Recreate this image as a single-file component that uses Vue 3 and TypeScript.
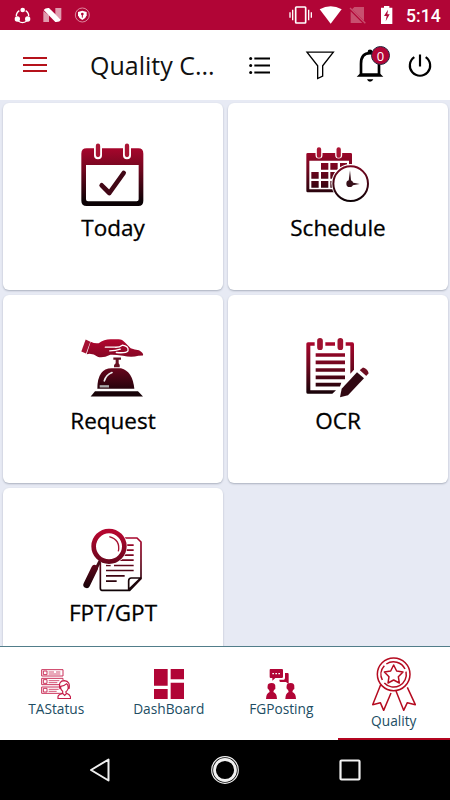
<script setup lang="ts">
interface Tile {
  id: string
  label: string
  box: string
}

interface Tab {
  id: string
  label: string
  active?: boolean
}

const tiles: Tile[] = [
  { id: 'today', label: 'Today', box: '60 30 195 210' },
  { id: 'schedule', label: 'Schedule', box: '75 30 195 210' },
  { id: 'request', label: 'Request', box: '60 22.5 195 210' },
  { id: 'ocr', label: 'OCR', box: '75 22.5 195 210' },
  { id: 'fpt', label: 'FPT/GPT', box: '60 15 195 210' },
]

const tabs: Tab[] = [
  { id: 'status', label: 'TAStatus' },
  { id: 'dashboard', label: 'DashBoard' },
  { id: 'posting', label: 'FGPosting' },
  { id: 'quality', label: 'Quality', active: true },
]
</script>

<template>
  <div class="screen">
    <div class="statusbar">
      <svg class="status-left" viewBox="0 0 300 90">
        <g fill="none" stroke="#fff" stroke-width="4">
          <path d="M58 32A19 19 0 0 0 49 49M55 63A20 20 0 0 0 80 63M86 49A19 19 0 0 0 77 32" />
        </g>
        <g fill="#fff">
          <circle cx="68" cy="30" r="7" /><circle cx="52" cy="57" r="8" /><circle cx="83" cy="57" r="8" />
          <path d="M130 33L147 46V66H130ZM166 24H184V59L166 44Z" opacity=".6" />
          <path d="M131 30Q136 23 147 24L183 59Q179 67 166 66Z" />
          <path d="M247 32L260 36V46Q258 55 247 60Q236 55 234 46V36Z" />
        </g>
        <circle cx="247" cy="45" r="21" fill="none" stroke="#e9a7b8" stroke-width="2.4" />
        <path d="M247 53V44" stroke="#b10536" stroke-width="3" />
        <circle cx="247" cy="42" r="4" fill="#b10536" />
      </svg>
      <div class="status-right">
        <svg class="status-icons" viewBox="180 0 330 90">
          <rect x="212" y="21" width="30" height="48" rx="2" fill="none" stroke="#fff" stroke-width="5" />
          <path d="M203 29V61M195 37V53M251 29V61M259 37V53" stroke="#fff" stroke-width="4" />
          <path d="M284 28Q317 9 350 28L317 71Z" fill="#fff" />
          <path d="M388 21H417V62L381 28ZM377 34L412 69H377Z" fill="#c8506f" />
          <path d="M375 24L421 70" stroke="#c8506f" stroke-width="4" />
          <path d="M470 23H477V18H493V23H502V72H468V23Z" fill="#fff" />
          <path d="M489 29L477 48H485L482 64L494 43H487Z" fill="#b10536" />
        </svg>
        <span class="clock">5:14</span>
      </div>
    </div>

    <header class="appbar">
      <svg class="menu" viewBox="0 0 24 16">
        <path d="M0 1H24M0 8H24M0 14H24" stroke="#b5121b" stroke-width="2" />
      </svg>
      <h1 class="title">Quality C...</h1>
      <div class="actions">
        <svg viewBox="60 127.500 615 135">
          <g stroke="#000" fill="none">
            <path d="M88 174H135M88 195H135M88 216H135" stroke-width="5.500" />
            <path d="M246 155H325L293 196V227L278 234V196Z" stroke-width="4" />
            <path d="M408 224V190Q408 158 435 158Q462 158 462 190V224" stroke-width="8" />
            <path d="M568 170A30.500 30.500 0 1 0 602 170" stroke-width="6.500" />
            <path d="M585 162V198" stroke-width="6.500" />
          </g>
          <circle cx="77" cy="174" r="4.500" /><circle cx="77" cy="195" r="4.500" /><circle cx="77" cy="216" r="4.500" />
          <circle cx="435" cy="154" r="7" />
          <path d="M395 229L406 218H464L475 229ZM426 236H445Q441 244 435 244Q429 244 426 236Z" />
        </svg>
        <span class="badge">0</span>
      </div>
    </header>

    <main class="grid">
      <button v-for="tile in tiles" :key="tile.id" class="tile">
        <svg class="tile-icon" :viewBox="tile.box">
          <defs>
            <linearGradient
              :id="'shade-' + tile.id"
              gradientUnits="userSpaceOnUse"
              x1="0"
              y1="40"
              x2="0"
              y2="215"
            >
              <stop offset="0" stop-color="#b3062f" />
              <stop offset=".45" stop-color="#71071f" />
              <stop offset="1" stop-color="#0b0205" />
            </linearGradient>
          </defs>

          <g v-if="tile.id === 'today'">
            <path
              fill="url(#shade-today)"
              fill-rule="evenodd"
              d="M80 55H235Q250 55 250 71V212Q250 228 235 228H80Q64 228 64 212V71Q64 55 80 55ZM78 105V208Q78 214 84 214H230Q236 214 236 208V105Z"
            />
            <path d="M114 48V76M201 48V76" stroke="#fff" stroke-width="24" stroke-linecap="round" />
            <path d="M114 47V75M201 47V75" stroke="#aa1434" stroke-width="13" stroke-linecap="round" />
            <path d="M125 166L148 189L191 129" fill="none" stroke="#420716" stroke-width="14" stroke-linecap="round" stroke-linejoin="round" />
          </g>

          <g v-else-if="tile.id === 'schedule'">
            <path
              fill="url(#shade-schedule)"
              fill-rule="evenodd"
              d="M83 69H212Q216 69 216 73V182Q216 187 211 187H83Q79 187 79 182V73Q79 69 83 69ZM88 92V178H207V92Z"
            />
            <path d="M117 58V75M176 58V75" stroke="#fff" stroke-width="21" stroke-linecap="round" />
            <path d="M117 58V77M176 58V77" stroke="#aa1434" stroke-width="13" stroke-linecap="round" />
            <path
              fill="url(#shade-schedule)"
              d="M123 99H145V119H123ZM151 99H173V119H151ZM180 99H201V119H180ZM94 126H116V146H94ZM123 126H145V146H123ZM151 126H173V146H151ZM94 153H116V173H94ZM123 153H145V173H123ZM151 153H173V173H151Z"
            />
            <circle cx="212" cy="160" r="58" fill="#fff" />
            <circle cx="212" cy="161" r="52" fill="#fff" stroke="url(#shade-schedule)" stroke-width="6" />
            <circle cx="209" cy="161" r="10" fill="#37101a" />
            <path d="M205 160L210 121L214 160ZM210 156L239 162L210 167Z" fill="#37101a" />
          </g>

          <g v-else-if="tile.id === 'request'">
            <path d="M77 42L91 49L78 84L64 78Z" fill="#a51032" />
            <path
              d="M92 49Q105 55 116 53Q133 40 155 41H176Q187 41 195 51L212 68Q224 73 237 74Q252 83 249 90L235 91Q215 97 189 91Q164 87 151 88Q128 99 113 94Q98 82 80 86Z"
              fill="url(#shade-request)"
            />
            <path d="M136 65H164Q178 66 187 59Q207 62 204 76Q198 84 169 81M149 76Q167 76 181 71" fill="none" stroke="#fff" stroke-width="4" stroke-linecap="round" />
            <path d="M160 96H183V103H176V113Q181 117 179 125H162Q160 117 167 113V103H160Z" fill="#671022" />
            <path d="M112 190Q112 128 155 128H183Q218 137 223 190Z" fill="url(#shade-request)" />
            <path d="M133 166Q138 148 156 141" fill="none" stroke="#eee" stroke-width="5" stroke-linecap="round" />
            <rect x="119" y="179" width="28" height="7" fill="#aaa" />
            <path d="M105 197H234L249 213H92Z" fill="#170308" />
          </g>

          <g v-else-if="tile.id === 'ocr'">
            <path
              fill="url(#shade-ocr)"
              fill-rule="evenodd"
              d="M84 50H217Q222 50 222 56V133L211 145V61H91V194H168L157 205H84Q79 205 79 200V55Q79 50 84 50Z"
            />
            <path d="M120 48V65M181 48V65" stroke="#fff" stroke-width="32" />
            <path d="M120 46V65M181 46V65" stroke="#9f1230" stroke-width="17" stroke-linecap="round" />
            <path fill="url(#shade-ocr)" d="M107 83H195V94H107ZM107 105H195V116H107ZM107 128H195V139H107ZM107 150H195V161H107ZM107 172H184L180 183H107Z" />
            <path d="M176 217L181 189L233 134L257 158L203 211Z" fill="#fff" />
            <path d="M180 215L185 190L231 140L252 158L204 209Z" fill="#310812" />
            <path d="M237 136L249 126Q262 129 266 143L257 153Z" fill="#6f0e22" />
            <path d="M235 133L260 155" stroke="#fff" stroke-width="4" />
          </g>

          <g v-else>
            <path d="M185 54H231L243 66V176L209 211H126Q121 211 121 204V116" fill="none" stroke="url(#shade-fpt)" stroke-width="5" />
            <path d="M206 209V182Q206 174 214 174H242Z" fill="#fff" stroke="#180408" stroke-width="5" stroke-linejoin="round" />
            <path
              fill="url(#shade-fpt)"
              d="M194 73H221V78H194ZM198 88H221V93H198ZM190 103H221V108H190ZM174 118H221V123H174ZM138 134H152V139H138ZM162 134H221V139H162ZM138 149H221V154H138ZM138 165H194V170H138ZM138 181H170V186H138Z"
            />
            <circle cx="147" cy="79" r="55" fill="#fff" />
            <path d="M120 123L107 148" stroke="#470b18" stroke-width="9" />
            <path d="M104 145L80 194" stroke="url(#shade-fpt)" stroke-width="20" stroke-linecap="round" />
            <circle cx="147" cy="79" r="46" fill="#fff" stroke="url(#shade-fpt)" stroke-width="14" />
            <path d="M148 50Q182 60 175 94" fill="none" stroke="#a61332" stroke-width="4" />
          </g>
        </svg>
        <span class="tile-label">{{ tile.label }}</span>
      </button>
    </main>

    <nav class="tabs">
      <button v-for="tab in tabs" :key="tab.id" class="tab" :class="{ active: tab.active }">
        <svg v-if="tab.id === 'status'" class="tab-icon" viewBox="123 87 90 90">
          <g fill="none" stroke="#ca315a" stroke-width="3">
            <path d="M125 89H189V108H125ZM125 115H189V134H125ZM125 141H189V160H125ZM130 93H141V104H130ZM130 119H141V130H130ZM130 145H141V156H130Z" />
            <path d="M146 96H162M168 96H181M146 102H181M146 122H178M146 128H172M146 148H176M146 154H170" stroke-width="2.500" />
          </g>
          <path d="M171 178V169Q174 161 187 159L180 149Q174 121 193 121Q211 123 207 148L200 158Q214 162 214 178Z" fill="#fff" />
          <path
            d="M174 176V169Q176 163 188 160L194 166L200 160Q212 163 212 176ZM188 160V154Q181 150 182 139Q193 138 200 131Q206 135 204 147Q200 155 198 155V160M180 147Q174 122 193 122Q212 124 207 147"
            fill="none"
            stroke="#c51c49"
            stroke-width="3.500"
          />
        </svg>
        <svg v-else-if="tab.id === 'dashboard'" class="tab-icon" viewBox="461 87 90 90">
          <path d="M461 87H502V137H461ZM511 87H551V118H511ZM461 147H502V177H461ZM511 128H551V177H511Z" fill="#b10536" />
        </svg>
        <svg v-else-if="tab.id === 'posting'" class="tab-icon" viewBox="123 87 90 90">
          <g fill="#b10536">
            <path d="M180 99H188Q191 99 191 103V133L183 126H166Q163 126 163 119H177Q180 118 180 113Z" />
            <path d="M136 87H171Q174 87 174 91V111Q174 114 170 114H151L142 122V114H137Q134 114 134 110V91Q134 87 136 87Z" />
            <path d="M134 156L132 149Q126 147 128 137Q128 129 140 129Q152 130 151 140Q153 147 147 150L145 156Q156 160 156 177H123Q123 160 134 156ZM191 156L189 149Q183 147 185 137Q185 129 197 129Q209 130 208 140Q210 147 204 150L202 156Q213 160 213 177H181Q181 160 191 156Z" />
          </g>
          <path d="M142 101H147M151 101H156M160 101H165" stroke="#fff" stroke-width="4" />
        </svg>
        <svg v-else class="tab-icon award" viewBox="438 51 138 162">
          <g fill="none" stroke="#b50b20" stroke-width="4.500" stroke-linejoin="round">
            <circle cx="506" cy="103" r="49" />
            <path d="M484 72A38 38 0 0 1 540 87M543 95A38 38 0 0 1 478 129M472 120A38 38 0 0 1 478 77" />
            <path d="M506 75L515 93L534 96L520 110L523 129L506 120L489 129L492 110L478 96L497 93Z" />
            <path d="M467 134L443 194L466 188L476 211L498 159M513 153L536 211L547 188L571 194L547 142" />
          </g>
        </svg>
        <span class="tab-label">{{ tab.label }}</span>
      </button>
    </nav>

    <div class="system-nav">
      <svg viewBox="0 0 450 60">
        <path d="M91 30L108.500 19.500V40.500Z" fill="none" stroke="#f0f0f0" stroke-width="2" stroke-linejoin="round" />
        <circle cx="225" cy="30" r="13.300" fill="none" stroke="#f0f0f0" stroke-width="1.200" />
        <circle cx="225" cy="30" r="10.500" fill="none" stroke="#f0f0f0" stroke-width="2.800" />
        <rect x="340.500" y="20.500" width="19" height="19" rx="1" fill="none" stroke="#f0f0f0" stroke-width="2.200" />
      </svg>
    </div>
  </div>
</template>

<style>
body {
  margin: 0;
  overflow: hidden;
}
</style>

<style scoped>
.screen {
  display: flex;
  flex-direction: column;
  width: 450px;
  height: 800px;
  overflow: hidden;
  background: #e7eaf4;
  font-family: "Open Sans", "Noto Sans", sans-serif;
}

button {
  margin: 0;
  padding: 0;
  border: 0;
  background: none;
  color: inherit;
  font: inherit;
}

svg {
  display: block;
  flex: none;
}

.statusbar {
  display: flex;
  flex: none;
  justify-content: space-between;
  height: 30px;
  background: #b10536;
}

.status-left {
  width: 100px;
  height: 30px;
}

.status-right {
  display: flex;
  width: 165px;
}

.status-icons {
  width: 110px;
  height: 30px;
}

.clock {
  margin-left: 11px;
  color: #fff;
  font: 500 17.6px/32px Roboto, sans-serif;
}

.appbar {
  display: flex;
  flex: none;
  align-items: center;
  box-sizing: border-box;
  height: 70px;
  padding-left: 23px;
  background: #fff;
}

.menu {
  width: 24px;
  height: 16px;
}

.title {
  width: 150px;
  margin: 0 0 0 43px;
  color: #111;
  font-size: 25px;
  font-weight: 400;
  line-height: 70px;
  white-space: nowrap;
}

.actions {
  position: relative;
  width: 205px;
  height: 45px;
  margin-left: 5px;
}

.actions svg {
  width: 205px;
  height: 45px;
}

.badge {
  position: absolute;
  top: 3px;
  left: 126px;
  box-sizing: border-box;
  width: 19px;
  height: 19px;
  border: 1px solid #24283f;
  border-radius: 50%;
  background: #b10536;
  color: #fff;
  font-size: 13px;
  line-height: 18px;
  text-align: center;
}

.grid {
  display: grid;
  flex: 1;
  grid-template-columns: repeat(2, 220px);
  grid-auto-rows: 187.5px;
  gap: 5px;
  min-height: 0;
  padding: 2.5px 2.5px 0;
  overflow: hidden;
}

.tile {
  display: flex;
  flex-direction: column;
  align-items: center;
  box-sizing: border-box;
  padding-top: 37.5px;
  border-radius: 6px;
  background: #fff;
  box-shadow: 0 1px 2px #aab0be;
}

.tile-icon {
  width: 65px;
  height: 70px;
}

.tile-label {
  padding: 2px 0 0 1px;
  color: #000;
  font-size: 22.5px;
  line-height: 32px;
  -webkit-text-stroke: 0.3px #000;
}

.tabs {
  display: grid;
  flex: none;
  grid-template-columns: repeat(4, 1fr);
  box-sizing: border-box;
  height: 94px;
  border-top: 1px solid #517d8a;
  background: #fff;
}

.tab {
  display: flex;
  flex-direction: column;
  align-items: center;
  box-sizing: border-box;
  padding-top: 22px;
  border-bottom: 2px solid transparent;
  color: #204d63;
  font-size: 13.7px;
}

.tab.active {
  padding-top: 10px;
  border-bottom-color: #b30520;
}

.tab-icon {
  width: 30px;
  height: 30px;
}

.tab-icon.award {
  width: 46px;
  height: 54px;
}

.tab-label {
  line-height: 20px;
}

.system-nav {
  flex: none;
  height: 60px;
  background: #000;
}

.system-nav svg {
  width: 450px;
  height: 60px;
}
</style>
